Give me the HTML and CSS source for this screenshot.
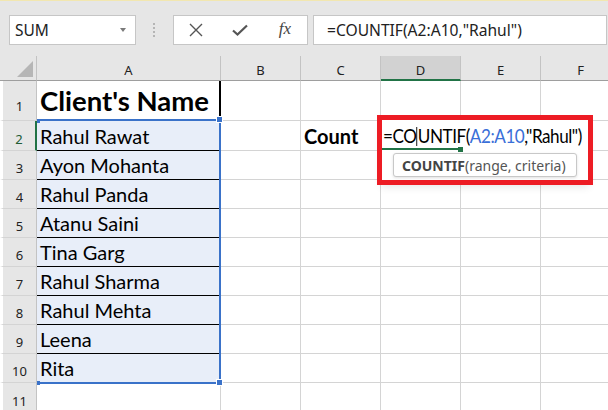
FILE: index.html
```html
<!DOCTYPE html>
<html>
<head>
<meta charset="utf-8">
<link rel="stylesheet" href="styles.css">
</head>
<body>
<div class="app">
  <div class="topline"></div>
  <div class="fbar">
    <div class="namebox"><span class="nbtext">SUM</span><span class="dd"></span></div>
    <div class="grip"></div>
    <div class="btns">
      <div class="btn"><svg width="14" height="14" viewBox="0 0 14 14"><path d="M1 1 L13 13 M13 1 L1 13" stroke="#555" stroke-width="1.4" fill="none"/></svg></div>
      <div class="btn"><svg width="16" height="12" viewBox="0 0 16 12"><path d="M1 6.5 L5.5 10.5 L15 1.5" stroke="#555" stroke-width="2.2" fill="none"/></svg></div>
      <div class="btn fx">fx</div>
    </div>
    <div class="finput">=COUNTIF(A2:A10,"Rahul")</div>
  </div>
  <div class="sheet">
    <div class="ch corner"><div class="tri"></div></div>
    <div class="ch">A</div>
    <div class="ch">B</div>
    <div class="ch">C</div>
    <div class="ch active">D</div>
    <div class="ch">E</div>
    <div class="ch">F</div>

    <div class="rh r1">1</div>
    <div class="c ca1 head">Client's Name</div>
    <div class="c"></div><div class="c"></div><div class="c"></div><div class="c"></div><div class="c"></div>

    <div class="rh cur">2</div>
    <div class="c sel">Rahul Rawat</div>
    <div class="c"></div><div class="c bold">Count</div><div class="c"></div><div class="c"></div><div class="c"></div>

    <div class="rh">3</div>
    <div class="c sel">Ayon Mohanta</div>
    <div class="c"></div><div class="c"></div><div class="c"></div><div class="c"></div><div class="c"></div>

    <div class="rh">4</div>
    <div class="c sel">Rahul Panda</div>
    <div class="c"></div><div class="c"></div><div class="c"></div><div class="c"></div><div class="c"></div>

    <div class="rh">5</div>
    <div class="c sel">Atanu Saini</div>
    <div class="c"></div><div class="c"></div><div class="c"></div><div class="c"></div><div class="c"></div>

    <div class="rh">6</div>
    <div class="c sel">Tina Garg</div>
    <div class="c"></div><div class="c"></div><div class="c"></div><div class="c"></div><div class="c"></div>

    <div class="rh">7</div>
    <div class="c sel">Rahul Sharma</div>
    <div class="c"></div><div class="c"></div><div class="c"></div><div class="c"></div><div class="c"></div>

    <div class="rh">8</div>
    <div class="c sel">Rahul Mehta</div>
    <div class="c"></div><div class="c"></div><div class="c"></div><div class="c"></div><div class="c"></div>

    <div class="rh">9</div>
    <div class="c sel">Leena</div>
    <div class="c"></div><div class="c"></div><div class="c"></div><div class="c"></div><div class="c"></div>

    <div class="rh">10</div>
    <div class="c sel last">Rita</div>
    <div class="c"></div><div class="c"></div><div class="c"></div><div class="c"></div><div class="c"></div>

    <div class="rh">11</div>
    <div class="c"></div>
    <div class="c"></div><div class="c"></div><div class="c"></div><div class="c"></div><div class="c"></div>
  </div>

  <div class="range"></div>
  <div class="hdl hdl-tr"></div>
  <div class="hdl hdl-br"></div>
  <div class="hdl-s hdl-tl"></div>
  <div class="hdl-s hdl-bl"></div>

  <div class="redbox">
    <div class="editor">
      <span class="etext">=CO<span class="caret"></span>UNTIF(<span class="ref">A2:A10</span>,"Rahul")</span>
      <div class="egreen"></div>
      <div class="ehandle"></div>
    </div>
    <div class="tip"><b>COUNTIF</b>(range, criteria)</div>
  </div>
</div>
</body>
</html>
```
FILE: styles.css
```css
html, body {
  margin: 0;
  padding: 0;
  background: #fff;
  overflow: hidden;
}
.app {
  position: relative;
  width: 608px;
  height: 410px;
  overflow: hidden;
  background: #fff;
}
.topline {
  height: 1px;
  background: #f2e7b0;
}
.fbar {
  height: 55px;
  box-sizing: border-box;
  background: #e6e6e6;
  display: flex;
  align-items: flex-start;
  padding: 14px 0 0 9px;
  font-family: "Noto Sans", "Open Sans", sans-serif;
}
.namebox {
  width: 127px;
  height: 30px;
  box-sizing: border-box;
  background: #fff;
  border: 1px solid #c6c6c6;
  display: flex;
  align-items: center;
  justify-content: space-between;
  padding: 0 9px 0 5px;
  font-size: 15.5px;
  color: #222;
}
.dd {
  width: 0;
  height: 0;
  border-left: 3.5px solid transparent;
  border-right: 3.5px solid transparent;
  border-top: 4px solid #7a7a7a;
}
.grip {
  width: 2px;
  height: 14px;
  margin: 8px 18px 0 17px;
  background: repeating-linear-gradient(#b5b5b5 0 2px, transparent 2px 4px);
}
.btns {
  width: 135px;
  height: 30px;
  box-sizing: border-box;
  background: #fff;
  border: 1px solid #c6c6c6;
  display: flex;
}
.btn {
  width: 45px;
  display: flex;
  align-items: center;
  justify-content: center;
}
.btn.fx {
  font-family: "Liberation Serif", serif;
  font-style: italic;
  font-size: 17px;
  color: #444;
  padding-bottom: 2px;
  box-sizing: border-box;
}
.finput {
  flex: 1;
  margin: 0 1px 0 5px;
  height: 30px;
  box-sizing: border-box;
  background: #fff;
  border: 1px solid #c6c6c6;
  display: flex;
  align-items: center;
  padding-left: 13px;
  font-size: 15.6px;
  color: #222;
  white-space: nowrap;
}

.sheet {
  display: grid;
  grid-template-columns: 37px 184px repeat(5, 80px);
  grid-template-rows: 25px 40px 30px repeat(8, 29px) 30px;
}
.ch {
  box-sizing: border-box;
  background: #e6e6e6;
  border-right: 1px solid #c3c3c3;
  border-bottom: 1px solid #9e9e9e;
  display: flex;
  align-items: flex-end;
  justify-content: center;
  padding-bottom: 3px;
  font-family: "Noto Sans", "Open Sans", sans-serif;
  font-size: 13px;
  line-height: 13px;
  color: #222;
}
.ch.active {
  background: #d2d2d2;
  border-bottom: 2px solid #217346;
  padding-bottom: 2px;
}
.ch.corner {
  justify-content: flex-end;
  padding: 0 3px 3px 0;
}
.tri {
  width: 16px;
  height: 16px;
  background: #b6b6b6;
  clip-path: polygon(100% 0, 100% 100%, 0 100%);
}
.rh {
  box-sizing: border-box;
  background: #e6e6e6;
  border-left: 3px solid #fff;
  border-right: 1px solid #c3c3c3;
  border-bottom: 1px solid #d4d4d4;
  display: flex;
  align-items: flex-end;
  justify-content: center;
  padding-bottom: 4px;
  font-family: "Noto Sans", "Open Sans", sans-serif;
  font-size: 13px;
  line-height: 13px;
  color: #222;
}
.rh.r1 {
  padding-bottom: 7px;
}
.rh.cur {
  border-right: 2px solid #217346;
  color: #215c35;
}
.c {
  box-sizing: border-box;
  border-right: 1px solid #d4d4d4;
  border-bottom: 1px solid #d4d4d4;
  display: flex;
  align-items: flex-end;
  padding: 0 0 4px 3px;
  font-family: Lato, "Liberation Sans", sans-serif;
  font-size: 20px;
  line-height: 20px;
  color: #000;
  white-space: nowrap;
}
.c.head {
  font-weight: 700;
  font-size: 27.5px;
  line-height: 27px;
  padding-bottom: 6px;
}
.c.ca1 {
  border-right: 2px solid #000;
}
.c.bold {
  font-weight: 700;
}
.c.sel {
  background: #e8eef9;
  border-bottom: 1px solid #000;
}
.c.sel.last {
  border-bottom-color: #d4d4d4;
}

.range {
  position: absolute;
  left: 37px;
  top: 119px;
  width: 184px;
  height: 265px;
  box-sizing: border-box;
  border: 2px solid #3a72c9;
  border-left: 0;
}
.hdl {
  position: absolute;
  width: 5px;
  height: 5px;
  background: #3a72c9;
  box-shadow: 0 0 0 1px #fff;
}
.hdl-tr { left: 217px; top: 117px; }
.hdl-br { left: 217px; top: 380px; }
.hdl-s {
  position: absolute;
  width: 3px;
  height: 4px;
  background: #3a72c9;
}
.hdl-tl { left: 37px; top: 119px; }
.hdl-bl { left: 37px; top: 381px; }

.redbox {
  position: absolute;
  left: 377px;
  top: 115px;
  width: 216px;
  height: 70px;
  box-sizing: border-box;
  border: 5px solid #ed1c24;
  background: #fff;
  box-shadow: 0 6px 8px -4px rgba(0,0,0,0.10);
}
.editor {
  position: relative;
  height: 30px;
  display: flex;
  align-items: flex-end;
  padding: 0 0 4px 1px;
  box-sizing: border-box;
  font-family: Lato, "Liberation Sans", sans-serif;
  font-size: 19px;
  line-height: 20px;
  letter-spacing: -0.5px;
  color: #000;
  white-space: nowrap;
}
.etext {
  display: inline-block;
  transform: scaleX(0.9);
  transform-origin: 0 50%;
}
.caret {
  display: inline-block;
  width: 1px;
  height: 19px;
  background: #000;
  vertical-align: -3px;
  margin-right: 0.5px;
}
.ref {
  color: #3a6fd8;
}
.egreen {
  position: absolute;
  left: 0;
  bottom: 0;
  width: 76px;
  height: 2px;
  background: #217346;
}
.ehandle {
  position: absolute;
  left: 76px;
  bottom: -2px;
  width: 5px;
  height: 5px;
  background: #217346;
}
.tip {
  margin: 3px 0 0 11px;
  width: 184px;
  height: 24px;
  box-sizing: border-box;
  border: 1px solid #c8c8c8;
  border-radius: 3px;
  background: #fff;
  box-shadow: 0 1px 3px rgba(0,0,0,0.12);
  padding-left: 8px;
  display: flex;
  align-items: center;
  font-family: "Noto Sans", "Open Sans", sans-serif;
  font-size: 14px;
  color: #555;
  white-space: nowrap;
}
.tip b {
  color: #444;
  font-weight: 700;
}
```
